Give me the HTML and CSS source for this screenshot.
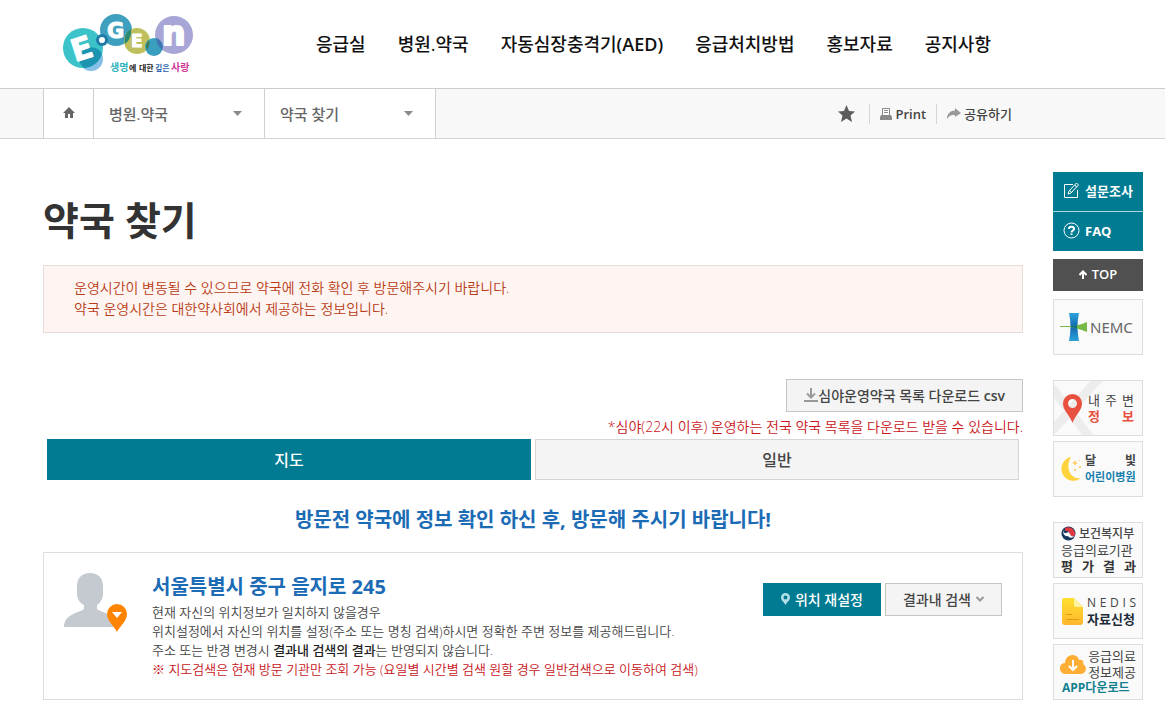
FILE: index.html
```html
<!DOCTYPE html>
<html lang="ko">

<head>
  <meta charset="utf-8">
  <title>약국 찾기</title>
  <link rel="stylesheet" href="styles.css">
</head>

<body>
  <header class="header">
    <a class="logo" href="#">
      <svg width="132" height="62" viewBox="0 0 132 62">
        <circle cx="29" cy="46" r="12" fill="#85bfe6" />
        <circle cx="21" cy="35" r="20" fill="#3cc3c9" />
        <path d="M18 42 A12 12 0 0 1 40 41 A20 20 0 0 1 22 55 A12 12 0 0 1 18 42" fill="#1b94b2" />
        <circle cx="54" cy="17" r="16" fill="#3f9fbe" />
        <circle cx="75" cy="28" r="13" fill="#bfbf5e" />
        <path d="M63 31 A13 13 0 0 1 69 16 A16 16 0 0 1 63 31" fill="#2c8a72" />
        <circle cx="112" cy="22" r="19" fill="#a7a6d6" />
        <circle cx="92" cy="34" r="9" fill="#3a9fbf" />
        <path d="M87 27 A9 9 0 0 0 85 37 A13 13 0 0 0 87 27" fill="#3d7a4d" />
        <path d="M94 25 A9 9 0 0 1 100 37 A19 19 0 0 1 94 25" fill="#3f72b0" />
        <circle cx="40" cy="27" r="6" fill="#1f7ba6" />
        <circle cx="40" cy="27" r="3" fill="#fff" />
        <g class="logo-letters">
          <text x="9" y="46" font-size="31" transform="rotate(-18 21 35)">E</text>
          <text x="45" y="25" font-size="21">G</text>
          <text x="69" y="34" font-size="17">E</text>
          <text x="100" y="32" font-size="33" stroke-width="2">n</text>
        </g>
        <text class="logo-words" y="58">
          <tspan x="48" font-size="10" fill="#2fb4bd">생명</tspan><tspan x="67" font-size="8" fill="#222">에</tspan>
          <tspan x="77" font-size="8" fill="#222">대한</tspan>
          <tspan x="93" font-size="8" fill="#2b5fae">깊은</tspan>
          <tspan x="109" font-size="10" fill="#d0379a">사랑</tspan>
        </text>
      </svg>
    </a>
    <nav class="gnb">
      <a href="#">응급실</a>
      <a href="#">병원.약국</a>
      <a href="#">자동심장충격기<b>(AED)</b></a>
      <a href="#">응급처치방법</a>
      <a href="#">홍보자료</a>
      <a href="#">공지사항</a>
    </nav>
  </header>

  <div class="location">
    <div class="crumbs">
      <a class="home" href="#" aria-label="홈">
        <svg width="12" height="11" viewBox="0 0 12 11"><path d="M6 0 L12 6 H10 V11 H7 V7 H5 V11 H2 V6 H0 Z" fill="#666" /></svg>
      </a>
      <button type="button" class="crumb">병원.약국
        <svg width="9" height="5" viewBox="0 0 9 5"><path d="M0 0 H9 L4.500 5 Z" fill="#8a8a8a" /></svg>
      </button>
      <button type="button" class="crumb">약국 찾기
        <svg width="9" height="5" viewBox="0 0 9 5"><path d="M0 0 H9 L4.500 5 Z" fill="#8a8a8a" /></svg>
      </button>
    </div>
    <div class="util">
      <button type="button" aria-label="즐겨찾기">
        <svg width="17" height="17" viewBox="0 0 17 17"><path d="M8.500 0 L11 6 L17 6.500 L12.500 10.500 L14 17 L8.500 13.500 L3 17 L4.500 10.500 L0 6.500 L6 6 Z" fill="#5c5c5c" /></svg>
      </button>
      <button type="button" class="print">
        <svg width="12" height="12" viewBox="0 0 12 12">
          <path d="M2.500 7 V0.500 H9.500 V7" fill="#fff" stroke="#8a8a8a" />
          <path d="M4 2.500 H8 M4 4.500 H8" stroke="#8a8a8a" />
          <path d="M1 7 H11 L12 9 V12 H0 V9 Z" fill="#8a8a8a" />
        </svg>
        Print
      </button>
      <button type="button">
        <svg width="14" height="11" viewBox="0 0 14 11"><path d="M8 0 L14 5 L8 9 V7 C4 6.500 2 8 0 11 C0 6 3 2.500 8 2.500 Z" fill="#999" /></svg>
        공유하기
      </button>
    </div>
  </div>

  <div class="wrap">
    <main class="content">
      <h1>약국 찾기</h1>
      <div class="notice">
        <p>운영시간이 변동될 수 있으므로 약국에 전화 확인 후 방문해주시기 바랍니다.</p>
        <p>약국 운영시간은 대한약사회에서 제공하는 정보입니다.</p>
      </div>

      <div class="download">
        <a class="btn" href="#"><svg width="14" height="14" viewBox="0 0 14 14"><path d="M7 0 V9 M3 5.500 L7 9.500 L11 5.500 M0 13 H14" fill="none" stroke="#999" stroke-width="2" /></svg><span>심야운영약국 목록 다운로드 <b>csv</b></span></a>
        <p>*심야(22시 이후) 운영하는 전국 약국 목록을 다운로드 받을 수 있습니다.</p>
      </div>

      <div class="tabs">
        <button type="button" class="on">지도</button>
        <button type="button">일반</button>
      </div>

      <h2>방문전 약국에 정보 확인 하신 후, 방문해 주시기 바랍니다!</h2>

      <section class="position">
        <svg width="64" height="59" viewBox="0 0 64 59">
          <path d="M26 0 C34 0 39 5 39 13 V21 C39 26 36 30 33 32 V36 C38 40 53 41 53 54 H0 C0 41 15 40 20 36 V32 C16 30 13 26 13 21 V13 C13 5 18 0 26 0" fill="#c5cad0" />
          <path d="M53 59 C50 53 43 48 43 41 A10 10 0 0 1 63 41 C63 48 56 53 53 59" fill="#ff8400" />
          <path d="M48 39 H58 L53 45 Z" fill="#fff" />
        </svg>
        <div class="info">
          <h3>서울특별시 중구 을지로 245</h3>
          <p>현재 자신의 위치정보가 일치하지 않을경우</p>
          <p>위치설정에서 자신의 위치를 설정(주소 또는 명칭 검색)하시면 정확한 주변 정보를 제공해드립니다.</p>
          <p>주소 또는 반경 변경시 <strong>결과내 검색의 결과</strong>는 반영되지 않습니다.</p>
          <p class="red">※ 지도검색은 현재 방문 기관만 조회 가능 (요일별 시간별 검색 원할 경우 일반검색으로 이동하여 검색)</p>
        </div>
        <div class="btns">
          <button type="button" class="btn teal"><svg width="9" height="12" viewBox="0 0 9 12"><path fill-rule="evenodd" d="M4.500 12 C3 9 0 7.500 0 4.500 A4.500 4.500 0 0 1 9 4.500 C9 7.500 6 9 4.500 12 M4.500 2.500 A2 2 0 0 0 4.500 6.500 A2 2 0 0 0 4.500 2.500" fill="#b5dfe8" /></svg>위치 재설정</button>
          <button type="button" class="btn">결과내 검색<svg width="8" height="6" viewBox="0 0 8 6"><path d="M0.500 1 L4 4.500 L7.500 1" fill="none" stroke="#999" stroke-width="2" /></svg></button>
        </div>
      </section>
    </main>

    <aside class="quick">
      <div class="quick-top">
        <a href="#">
          <svg width="17" height="17" viewBox="0 0 17 17" fill="none" stroke="#fff"><path d="M10 2.500 H1.500 V15.500 H14.500 V8" /><path d="M5 12 L6 9 L13.500 1 L15.500 3 L8 11 Z M7 8.500 L8.500 10.500 M12 3 L13.500 5" /></svg>
          설문조사
        </a>
        <a href="#">
          <svg width="17" height="17" viewBox="0 0 17 17" fill="none" stroke="#fff"><circle cx="8.500" cy="8.500" r="7.500" /><path d="M6 7 C6 4 11 4 11 7 C11 8.500 8.500 8.500 8.500 10.500 M8.500 11.500 V13" stroke-width="2" /></svg>
          FAQ
        </a>
      </div>
      <a class="top" href="#">
        <svg width="8" height="9" viewBox="0 0 8 9" fill="none" stroke="#fff" stroke-width="2"><path d="M4 9 V1 M0.500 5 L4 1.500 L7.500 5" /></svg>
        TOP
      </a>

      <a class="banner nemc" href="#">
        <svg width="27" height="28" viewBox="0 0 27 28">
          <defs>
            <linearGradient id="nemcBlue" x2="0" y2="1"><stop offset="0" stop-color="#2ba3dc" /><stop offset="0.500" stop-color="#1467b0" /><stop offset="1" stop-color="#2ba3dc" /></linearGradient>
          </defs>
          <path d="M9 0 H19 C17 9 17 18 19 28 H9 C11 18 11 9 9 0" fill="url(#nemcBlue)" />
          <path d="M0 13 H10 C17 13 22 11 27 9 V19 C22 17 17 15 10 14 H0 Z" fill="#76b947" />
          <path d="M11 13 C14 13 16 12 17 12 V16 C16 15 14 15 11 14 Z" fill="#12737f" />
        </svg>
        <span>NEMC</span>
      </a>

      <div class="banner-group">
        <a class="banner near" href="#">
          <svg class="road" width="88" height="54" viewBox="0 0 88 54"><path d="M-2 7 L37 58 M-2 50 L46 -4" stroke="#ededed" stroke-width="9" /></svg>
          <svg width="19" height="29" viewBox="0 0 19 29"><path fill-rule="evenodd" d="M9.500 29 C7 21 0 17 0 9.500 A9.500 9.500 0 0 1 19 9.500 C19 17 12 21 9.500 29 M9.500 5 A4.500 4.500 0 0 0 9.500 14 A4.500 4.500 0 0 0 9.500 5" fill="#e8503f" /></svg>
          <span><span>내 주 변</span><b>정 보</b></span>
        </a>
        <a class="banner moon" href="#">
          <svg width="21" height="24" viewBox="0 0 21 24"><path d="M10 0 A12 12 0 1 0 20 21 C11 23 3 12 10 0" fill="#ffd33c" /><path d="M14 3 l1 2 l2 1 l-2 1 l-1 2 l-1 -2 l-2 -1 l2 -1 Z M18 3 h1 v1 h-1 Z M13 12 h2 v2 h-2 Z M18 9 h2 v2 h-2 Z" fill="#ffcf6b" /></svg>
          <span><b>달 빛</b><b class="blue">어린이병원</b></span>
        </a>
      </div>

      <div class="banner-group">
        <a class="banner mohw" href="#">
          <span class="ministry">
            <svg width="15" height="15" viewBox="0 0 15 15"><circle cx="7.500" cy="7.500" r="7" fill="#16365f" /><path d="M4 2 A7 7 0 0 1 14 9 C13 11 10 11 9 8 C8 6 6 4 4 5 Z" fill="#e0393f" /><path d="M4 3 C2 5 3 8 5 7 C7 6 8 6 9 8 C10 11 13 11 14 9 C12 13 8 12 7 10 C4 11 0 7 4 3" fill="#fff" /></svg>
            보건복지부
          </span>
          <span>응급의료기관</span>
          <b>평 가 결 과</b>
        </a>
        <a class="banner nedis" href="#">
          <svg width="21" height="27" viewBox="0 0 21 27">
            <defs>
              <linearGradient id="docYellow" x2="0" y2="1"><stop offset="0" stop-color="#ffe02e" /><stop offset="1" stop-color="#ffb62e" /></linearGradient>
            </defs>
            <path d="M2 0 H12 L21 9 V24 Q21 27 18 27 H3 Q0 27 0 24 V2 Q0 0 2 0" fill="url(#docYellow)" />
            <path d="M12 0 V7 Q12 9 14 9 H21 Z" fill="#fff3a0" />
            <path d="M4 16.500 H10 M4 21.500 H17" stroke="#e29a10" />
          </svg>
          <span><span class="en">N E D I S</span><b>자료신청</b></span>
        </a>
        <a class="banner app" href="#">
          <svg width="26" height="19" viewBox="0 0 26 19"><path d="M6 19 C-2 19 -2 8 5 8 C5 -1 17 -3 19 5 C23 4 24 7 23 9 C28 12 26 19 21 19 Z" fill="#ffae35" /><path d="M13 5 V15 M9 11 L13 15 L17 11" fill="none" stroke="#fff" stroke-width="2" /></svg>
          <span>응급의료<br>정보제공</span>
          <b>APP다운로드</b>
        </a>
      </div>
    </aside>
  </div>
</body>

</html>
```

FILE: styles.css
```css
* {
  margin: 0;
  padding: 0;
  box-sizing: border-box;
}

body {
  font-family: "Open Sans", "Noto Sans CJK KR", sans-serif;
  font-size: 13px;
  font-weight: 350;
  color: #444;
  background-color: #fff;
}

a {
  color: inherit;
  text-decoration: none;
}

button {
  font-family: inherit;
  color: inherit;
  background: none;
  border: none;
  cursor: pointer;
}

b {
  font-weight: 700;
}

svg {
  display: block;
  flex: none;
}

/* header */
.header {
  display: flex;
  align-items: center;
  height: 88px;
  padding-left: 62px;
}

.logo-letters {
  font-family: "DejaVu Sans", sans-serif;
  font-weight: 700;
  fill: #fff;
  stroke: #fff;
  stroke-linejoin: round;
}

.logo-words {
  font-family: "Noto Sans CJK KR", sans-serif;
  font-weight: 700;
}

.gnb {
  display: flex;
  gap: 32px;
  margin-left: 122px;
  font-size: 18px;
  font-weight: 500;
  line-height: 26px;
  color: #111;
}

.gnb b {
  font-weight: 600;
}

/* location bar */
.location {
  display: flex;
  justify-content: space-between;
  height: 51px;
  padding: 0 153px 0 43px;
  background-color: #f8f8f8;
  border-top: 1px solid #ccc;
  border-bottom: 1px solid #d5d5d5;
}

.crumbs {
  display: flex;
  background-color: #fff;
  border-left: 1px solid #d0d0d0;
}

.home {
  display: flex;
  align-items: center;
  justify-content: center;
  width: 50px;
  padding-bottom: 2px;
  border-right: 1px solid #d0d0d0;
}

.crumb {
  display: flex;
  align-items: center;
  justify-content: space-between;
  width: 171px;
  padding: 0 22px 0 15px;
  border-right: 1px solid #d0d0d0;
  font-size: 15px;
  font-weight: 500;
  color: #666;
}

.util {
  display: flex;
  align-items: center;
}

.util button {
  display: flex;
  align-items: center;
  gap: 4px;
  height: 20px;
  padding: 0 10px;
  font-size: 13px;
  font-weight: 500;
  color: #444;
}

.util .print {
  font-weight: 600;
}

.util button:first-child {
  padding-right: 14px;
}

.util button:last-child {
  padding-right: 0;
  gap: 3px;
}

.util button + button {
  border-left: 1px solid #d5d5d5;
}

/* main */
.wrap {
  display: flex;
  align-items: flex-start;
  gap: 30px;
  padding: 33px 22px 12px 43px;
}

.content {
  flex: 1;
}

h1 {
  margin-top: 19px;
  font-size: 39px;
  line-height: 58px;
  color: #333;
}

.notice {
  margin-top: 16px;
  padding: 11px 30px 13px;
  background-color: #fef5f2;
  border: 1px solid #e8dcd8;
  font-size: 14px;
  line-height: 21px;
  color: #b93a14;
}

.download {
  display: flex;
  flex-direction: column;
  align-items: flex-end;
  margin-top: 46px;
}

.download p {
  margin-top: 4px;
  font-size: 14px;
  line-height: 22px;
  color: #c8141a;
}

.btn {
  display: flex;
  align-items: center;
  height: 33px;
  padding: 0 17px 2px;
  background-color: #f4f4f4;
  border: 1px solid #c5c5c5;
  font-size: 14px;
  font-weight: 500;
  color: #444;
}

.btn b {
  font-weight: 600;
}

.btn.teal {
  background-color: #007b92;
  border-color: #007b92;
  color: #fff;
}

.tabs {
  display: flex;
  gap: 4px;
  margin-top: 1px;
  padding: 0 4px;
}

.tabs button {
  flex: 1;
  height: 41px;
  padding-bottom: 2px;
  background-color: #f4f4f4;
  border: 1px solid #d5d5d5;
  font-size: 16px;
  font-weight: 500;
}

.tabs .on {
  background-color: #007b92;
  border-color: #007b92;
  color: #fff;
}

h2 {
  margin: 25px 0 17px;
  font-size: 20px;
  font-weight: 700;
  line-height: 30px;
  text-align: center;
  color: #1c6bb5;
}

.position {
  display: flex;
  align-items: flex-start;
  padding: 20px;
  border: 1px solid #ddd;
}

.info {
  flex: 1;
  margin-left: 24px;
  line-height: 19px;
}

.info h3 {
  margin-bottom: 2px;
  font-size: 20px;
  line-height: 28px;
  color: #1c6bb5;
}

.info strong {
  font-weight: 500;
  color: #222;
}

.info .red {
  color: #c8141a;
}

.btns {
  display: flex;
  gap: 4px;
  margin-top: 10px;
  margin-left: -100px;
}

.btns .btn {
  gap: 5px;
}

/* quick menu */
.quick {
  width: 90px;
}

.quick-top {
  background-color: #007b92;
  font-weight: 700;
  color: #fff;
}

.quick-top a {
  display: flex;
  align-items: center;
  gap: 5px;
  height: 39px;
  padding: 0 0 2px 10px;
}

.quick-top a + a {
  height: 40px;
  border-top: 1px solid #b0d6dd;
}

.top {
  display: flex;
  align-items: center;
  justify-content: center;
  gap: 5px;
  height: 32px;
  margin: 8px 0;
  padding-bottom: 2px;
  background-color: #505050;
  font-weight: 600;
  color: #fff;
}

.banner-group {
  display: flex;
  flex-direction: column;
  gap: 5px;
  margin-top: 25px;
}

.banner {
  display: flex;
  align-items: center;
  height: 56px;
  padding: 0 6px;
  background-color: #fafafa;
  border: 1px solid #ddd;
  font-size: 13px;
  font-weight: 400;
  line-height: 16px;
}

.banner b,
.banner span span {
  display: block;
  white-space: nowrap;
  text-align-last: justify;
}

.nemc {
  gap: 3px;
  font-family: "Noto Sans", sans-serif;
  font-size: 15px;
  color: #666;
}

.near {
  position: relative;
  justify-content: space-between;
  padding: 0 8px 0 9px;
}

.near > span {
  position: relative;
  width: 46px;
}

.near svg {
  position: relative;
}

.near .road {
  position: absolute;
  top: 0;
  left: 0;
}

.near b {
  color: #e8503f;
}

.moon {
  justify-content: space-between;
  padding: 0 6px 0 7px;
  font-size: 12px;
}

.moon > span {
  width: 51px;
}

.moon .blue {
  font-size: 11px;
  color: #1580ad;
}

.mohw {
  flex-direction: column;
  align-items: stretch;
  justify-content: center;
  padding: 0 6px 0 7px;
  text-align-last: justify;
}

.ministry {
  display: flex;
  gap: 3px;
  font-size: 12px;
  font-weight: 500;
}

.mohw b {
  color: #333;
}

.nedis {
  justify-content: space-between;
  padding: 0 6px 0 8px;
}

.nedis > span {
  width: 49px;
}

.nedis .en {
  font-size: 12px;
}

.nedis b {
  color: #222b38;
}

.app {
  flex-wrap: wrap;
  justify-content: space-between;
  align-content: center;
}

.app b {
  width: 100%;
  padding-left: 2px;
  font-size: 12px;
  color: #12808f;
}
```
